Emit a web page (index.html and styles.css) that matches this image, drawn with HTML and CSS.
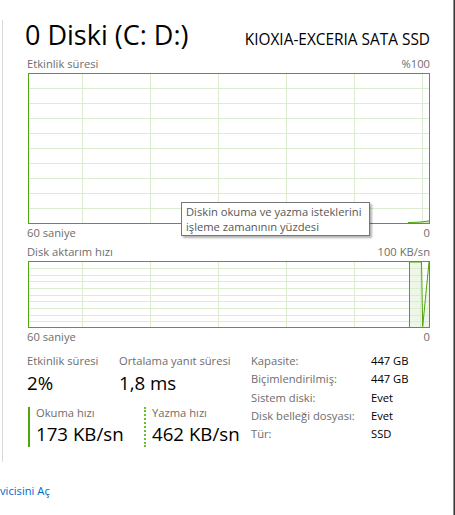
FILE: index.html
```html
<!DOCTYPE html>
<html lang="tr">
<head>
<meta charset="utf-8">
<title>Disk</title>
<link rel="stylesheet" href="styles.css">
</head>
<body>
<div class="window">
  <section class="panel">
    <header class="head">
      <h1 class="title">0 Diski (C: D:)</h1>
      <div class="model">KIOXIA-EXCERIA SATA SSD</div>
    </header>

    <div class="axis axis-top"><span>Etkinlik süresi</span><span>%100</span></div>
    <div class="chart chart-activity">
      <svg class="graph" width="402" height="151" viewBox="0 0 402 151">
        <g stroke="#dcecd0" stroke-width="1">
          <path d="M1 15.5H401M1 30.5H401M1 45.5H401M1 60.5H401M1 75.5H401M1 90.5H401M1 105.5H401M1 120.5H401M1 135.5H401"/>
          <path d="M54.5 1V150M122.5 1V150M190.5 1V150M258.5 1V150M326.5 1V150M394.5 1V150"/>
        </g>
        <path d="M380 150L392 149.2L401 148V150Z" fill="#d3e8c1"/>
        <path d="M380 149.6L392 149.1L401 147.9" fill="none" stroke="#4da60c" stroke-width="1"/>
        <rect x="0.5" y="0.5" width="401" height="150" fill="none" stroke="#4da60c"/>
      </svg>
    </div>
    <div class="axis axis-bottom"><span>60 saniye</span><span>0</span></div>

    <div class="axis axis-top2"><span>Disk aktarım hızı</span><span>100 KB/sn</span></div>
    <div class="chart chart-transfer">
      <svg class="graph" width="402" height="67" viewBox="0 0 402 67">
        <path d="M382 1H393.5L394.7 66H382Z M394.7 66L401 1V66Z" fill="#eef6e7"/>
        <g stroke="#dcecd0" stroke-width="1">
          <path d="M1 7.5H401M1 14.5H401M1 20.5H401M1 27.5H401M1 34.5H401M1 40.5H401M1 47.5H401M1 54.5H401M1 60.5H401"/>
          <path d="M54.5 1V66M122.5 1V66M190.5 1V66M258.5 1V66M326.5 1V66M392.5 1V66"/>
        </g>
        <path d="M381.5 66V1H393.5L394.7 65.5L401 1" fill="none" stroke="#4da60c" stroke-width="1"/>
        <rect x="0.5" y="0.5" width="401" height="66" fill="none" stroke="#4da60c"/>
      </svg>
    </div>
    <div class="axis axis-bottom2"><span>60 saniye</span><span>0</span></div>

    <div class="stats">
      <div class="metrics">
        <div class="metric-row">
          <div class="metric metric-active">
            <div class="m-label">Etkinlik süresi</div>
            <div class="m-value">2%</div>
          </div>
          <div class="metric">
            <div class="m-label">Ortalama yanıt süresi</div>
            <div class="m-value">1,8 ms</div>
          </div>
        </div>
        <div class="rates">
          <div class="rate rate-read">
            <div class="r-label">Okuma hızı</div>
            <div class="m-value r-value">173 KB/sn</div>
          </div>
          <div class="rate rate-write">
            <div class="r-label">Yazma hızı</div>
            <div class="m-value r-value">462 KB/sn</div>
          </div>
        </div>
      </div>
      <dl class="props">
        <dt>Kapasite:</dt><dd>447 GB</dd>
        <dt>Biçimlendirilmiş:</dt><dd>447 GB</dd>
        <dt>Sistem diski:</dt><dd>Evet</dd>
        <dt>Disk belleği dosyası:</dt><dd>Evet</dd>
        <dt>Tür:</dt><dd>SSD</dd>
      </dl>
    </div>
  </section>

  <div class="tooltip">Diskin okuma ve yazma isteklerini<br>işleme zamanının yüzdesi</div>

  <a class="link" href="#">vicisini Aç</a>
</div>
</body>
</html>
```

FILE: styles.css
```css
html {
  background: #3a3a3a;
}

body {
  margin: 0;
  font-family: "Open Sans", "Noto Sans", sans-serif;
  color: #000;
}

.window {
  position: relative;
  width: 453px;
  height: 515px;
  background: #fff;
  border-right: 1px solid #8c8c8c;
  overflow: hidden;
}

.panel {
  box-sizing: border-box;
  width: 428px;
  height: 442px;
  margin: 20px 0 0 2px;
  border-left: 1px solid #d9d9d9;
  padding-left: 24px;
}

.head {
  display: flex;
  justify-content: space-between;
  align-items: baseline;
  height: 29px;
}

.title {
  margin: 0 0 0 -2px;
  font-size: 27px;
  font-weight: 400;
  line-height: 29px;
}

.model {
  font-size: 15.4px;
  line-height: 29px;
}

.axis {
  display: flex;
  justify-content: space-between;
  font-size: 11.2px;
  line-height: 16px;
  color: #6d6d6d;
}

.axis-top {
  margin-top: 7px;
}

.axis-bottom {
  margin-top: 1px;
}

.axis-top2 {
  margin-top: 3px;
}

.axis-bottom2 {
  margin-top: 1px;
}

.chart {
  margin: 1px 0 0 1px;
}

.graph {
  display: block;
}

.stats {
  display: flex;
  align-items: flex-start;
  margin-top: 8px;
}

.metrics {
  width: 224px;
}

.metric-row {
  display: flex;
}

.metric-active {
  width: 92px;
}

.m-label {
  font-size: 11.2px;
  line-height: 16px;
  color: #6d6d6d;
}

.m-value {
  margin-top: 2px;
  font-size: 18.7px;
  line-height: 24px;
}

.rates {
  display: flex;
  margin: 12px 0 0 1px;
}

.rate {
  padding: 0 0 1px 6px;
}

.rate-read {
  width: 108px;
  border-left: 2px solid #4da60c;
}

.rate-write {
  border-left: 2px dotted #6cbf2c;
}

.r-label {
  font-size: 11.2px;
  line-height: 11px;
  color: #6d6d6d;
}

.r-value {
  margin-top: 4px;
}

.props {
  display: grid;
  grid-template-columns: 120px auto;
  align-content: start;
  margin: -1px 0 0;
  font-size: 11.2px;
  line-height: 18.3px;
}

.props dt {
  color: #6d6d6d;
}

.props dd {
  margin: 0;
  color: #000;
}

.tooltip {
  position: absolute;
  left: 181px;
  top: 202px;
  width: 189px;
  box-sizing: border-box;
  padding: 1px 4px 1px;
  border: 1px solid #767676;
  background: #fff;
  box-shadow: 2px 2px 2px rgba(0, 0, 0, 0.3);
  font-size: 11.2px;
  line-height: 15px;
  color: #575757;
  white-space: nowrap;
}

.link {
  display: block;
  margin-top: 21px;
  font-size: 11.2px;
  line-height: 16px;
  color: #0066cc;
  text-decoration: none;
}
```
